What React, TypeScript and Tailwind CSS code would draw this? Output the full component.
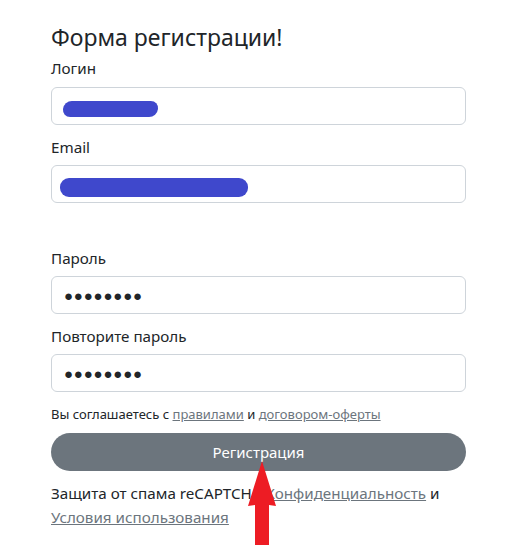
export default function App() {
  return (
    <main className="relative min-h-[551px] w-[515px] bg-white text-[#212529] font-['Segoe_UI','Noto_Sans',sans-serif]">
      <div className="w-[415px] ml-[51px] pt-[20px]">
        {/* Заголовок */}
        <h3 className="text-[23px] leading-[34px] font-normal">Форма регистрации!</h3>

        <label className="block mt-[2px] text-[15.2px] leading-6">Логин</label>
        <div className="mt-[7px] h-[38px] border border-[#ced4da] rounded-md flex items-center px-3">
          <div className="w-[95px] h-[16px] bg-[#3f48cc] rounded-[8px] -skew-x-6 mt-[6px] ml-[-1px]" />
        </div>

        <label className="block mt-[10px] text-[15.2px] leading-6">Email</label>
        <div className="mt-[6px] h-[38px] border border-[#ced4da] rounded-md flex items-center px-2">
          <div className="w-[188px] h-[19px] bg-[#3f48cc] rounded-[9px] mt-[6px]" />
        </div>

        <label className="block mt-[43px] text-[15.2px] leading-6">Пароль</label>
        <div className="mt-[6px] h-[38px] border border-[#ced4da] rounded-md flex items-center px-3 text-[15px] tracking-[0.8px]">
          ●●●●●●●●
        </div>

        <label className="block mt-[10px] text-[15.2px] leading-6">Повторите пароль</label>
        <div className="mt-[6px] h-[38px] border border-[#ced4da] rounded-md flex items-center px-3 text-[15px] tracking-[0.8px]">
          ●●●●●●●●
        </div>

        <p className="mt-[12px] text-[13px] leading-[21px]">
          Вы соглашаетесь с <a className="text-[#6c757d] underline">правилами</a> и{' '}
          <a className="text-[#6c757d] underline">договором-оферты</a>
        </p>

        <button className="mt-[8px] w-full h-[38px] rounded-full bg-[#6c757d] text-white text-[15px]">
          Регистрация
        </button>

        <p className="mt-[10px] text-[15.2px] leading-6">
          Защита от спама reCAPTCHA <a className="text-[#6c757d] underline">Конфиденциальность</a> и{' '}
          <a className="text-[#6c757d] underline">Условия использования</a>
        </p>
      </div>

      {/* красная стрелка поверх */}
      <svg className="absolute left-[248px] top-[461px]" width="30" height="86" viewBox="0 0 30 86">
        <path d="M14 0 L28 45 L21 44 L21 84 L7 84 L7 44 L0 45 Z" fill="#ed1c24" />
      </svg>
    </main>
  )
}
